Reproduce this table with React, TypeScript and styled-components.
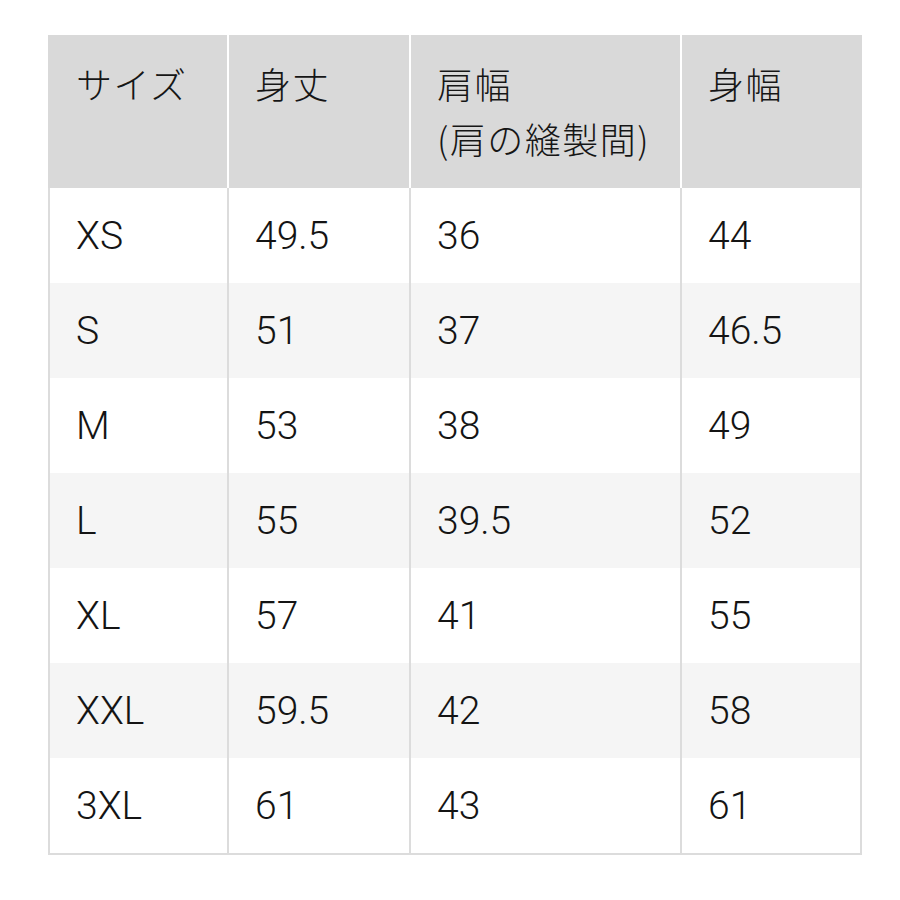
import React from "react";
import styled, { createGlobalStyle } from "styled-components";

const Global = createGlobalStyle`
  html, body { margin: 0; padding: 0; background: #ffffff; }
  body {
    font-family: Roboto, "Liberation Sans", "Noto Sans CJK JP", Arial, sans-serif;
    color: #141414;
  }
`;

const Page = styled.div`
  padding: 35px 0 0 48px;
`;

const Table = styled.div`
  width: 814px;
  display: flex;
  flex-direction: column;
  border-left: 2px solid #dcdcdc;
  border-right: 2px solid #dcdcdc;
  border-bottom: 2px solid #dcdcdc;
  box-sizing: border-box;
`;

const HeadRow = styled.div`
  display: grid;
  grid-template-columns: 179px 182px 271px 1fr;
  height: 153px;
  margin-left: -2px;
  margin-right: -2px;
`;

const HeadCell = styled.div<{ $first?: boolean }>`
  background: #d9d9d9;
  border-left: ${(p) => (p.$first ? "none" : "2px solid #ffffff")};
  padding: 21px 0 0 ${(p) => (p.$first ? "28px" : "26px")};
  font-family: "Noto Sans CJK JP", "Liberation Sans", sans-serif;
  font-weight: 300;
  font-size: 36px;
  line-height: 55px;
  color: #161616;
  box-sizing: border-box;
  letter-spacing: 1.5px;
`;

const Row = styled.div<{ $shade: boolean }>`
  display: grid;
  grid-template-columns: 177px 182px 271px 1fr;
  height: 95px;
  background: ${(p) => (p.$shade ? "#f5f5f5" : "#ffffff")};
`;

const Cell = styled.div<{ $first?: boolean }>`
  display: flex;
  align-items: center;
  border-left: ${(p) => (p.$first ? "none" : "2px solid #dcdcdc")};
  padding-left: 26px;
  font-size: 39px;
  font-weight: 300;
  color: #141414;
  box-sizing: border-box;
`;

const rows = [
  ["XS", "49.5", "36", "44"],
  ["S", "51", "37", "46.5"],
  ["M", "53", "38", "49"],
  ["L", "55", "39.5", "52"],
  ["XL", "57", "41", "55"],
  ["XXL", "59.5", "42", "58"],
  ["3XL", "61", "43", "61"],
];

export default function App() {
  return (
    <>
      <Global />
      <Page>
        <Table>
          <HeadRow>
            <HeadCell $first>サイズ</HeadCell>
            <HeadCell>身丈</HeadCell>
            <HeadCell>
              肩幅
              <br />
              (肩の縫製間)
            </HeadCell>
            <HeadCell>身幅</HeadCell>
          </HeadRow>
          {rows.map((r, i) => (
            <Row key={r[0]} $shade={i % 2 === 1}>
              {r.map((v, j) => (
                <Cell key={j} $first={j === 0}>
                  {v}
                </Cell>
              ))}
            </Row>
          ))}
        </Table>
      </Page>
    </>
  );
}
